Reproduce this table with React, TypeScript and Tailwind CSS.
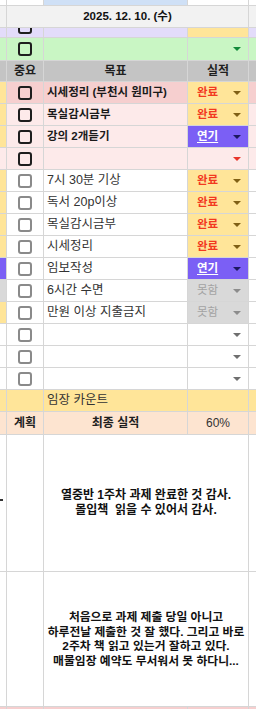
import React from 'react';

type Status = 'done' | 'delay' | 'fail' | 'none';

interface GoalRow {
  left: string;
  bg: string;
  goal: string;
  strong?: boolean;
  status: Status;
  arrow?: string;
}

const cell = 'border-r border-b border-[#d6d6d6]';

const rows: GoalRow[] = [
  { left: 'bg-[#ffe599]', bg: 'bg-[#f6cfcf]', goal: '시세정리 (부천시 원미구)', strong: true, status: 'done' },
  { left: 'bg-[#ffe599]', bg: 'bg-[#fdeaea]', goal: '목실감시금부', strong: true, status: 'done' },
  { left: 'bg-[#ffe599]', bg: 'bg-[#fdeaea]', goal: '강의 2개듣기', strong: true, status: 'delay' },
  { left: 'bg-[#fdeaea]', bg: 'bg-[#fdeaea]', goal: '', strong: true, status: 'none', arrow: '#e8342a' },
  { left: 'bg-[#ffe599]', bg: 'bg-white', goal: '7시 30분 기상', status: 'done' },
  { left: 'bg-[#ffe599]', bg: 'bg-white', goal: '독서 20p이상', status: 'done' },
  { left: 'bg-[#ffe599]', bg: 'bg-white', goal: '목실감시금부', status: 'done' },
  { left: 'bg-[#ffe599]', bg: 'bg-white', goal: '시세정리', status: 'done' },
  { left: 'bg-[#7b5ff5]', bg: 'bg-white', goal: '임보작성', status: 'delay' },
  { left: 'bg-[#d9d9d9]', bg: 'bg-white', goal: '6시간 수면', status: 'fail' },
  { left: 'bg-[#ffe599]', bg: 'bg-white', goal: '만원 이상 지출금지', status: 'fail' },
  { left: 'bg-white', bg: 'bg-white', goal: '', status: 'none', arrow: '#6f6f6f' },
  { left: 'bg-white', bg: 'bg-white', goal: '', status: 'none', arrow: '#6f6f6f' },
  { left: 'bg-white', bg: 'bg-white', goal: '', status: 'none', arrow: '#6f6f6f' },
];

function Arrow({ color }: { color: string }) {
  return (
    <svg width="8" height="4" viewBox="0 0 8 4" className="shrink-0">
      <polygon points="0,0 8,0 4,4" fill={color} />
    </svg>
  );
}

function Check({ strong }: { strong?: boolean }) {
  return (
    <span
      className={
        strong
          ? 'block w-[14px] h-[14px] rounded-[3px] border-2 border-[#1e1e1e] shrink-0'
          : 'block w-[14px] h-[14px] rounded-[3px] border-2 border-[#8a8a8a] shrink-0'
      }
    />
  );
}

function StatusCell({ status, arrow }: { status: Status; arrow?: string }) {
  if (status === 'done') {
    return (
      <div className={`${cell} bg-[#ffe599] flex items-center justify-between pl-[9px] pr-[7px]`}>
        <span className="font-bold text-[#f2391f]">완료</span>
        <Arrow color="#806015" />
      </div>
    );
  }
  if (status === 'delay') {
    return (
      <div className={`${cell} bg-[#7b5ff5] flex items-center justify-between pl-[9px] pr-[7px]`}>
        <span className="font-bold text-white underline underline-offset-2">연기</span>
        <Arrow color="#1d1860" />
      </div>
    );
  }
  if (status === 'fail') {
    return (
      <div className={`${cell} bg-[#d9d9d9] flex items-center justify-between pl-[9px] pr-[7px]`}>
        <span className="text-[#a3a3a3]">못함</span>
        <Arrow color="#8c8c8c" />
      </div>
    );
  }
  return (
    <div className={`${cell} flex items-center justify-end pr-[7px]`}>
      <Arrow color={arrow ?? '#6f6f6f'} />
    </div>
  );
}

export default function App() {
  return (
    <div className="w-[256px] h-[709px] overflow-hidden bg-white text-[12px] text-[#1f1f1f] font-['Liberation_Sans','Noto_Sans_CJK_KR',sans-serif]">
      <div className="grid grid-cols-[7px_37px_144px_61px_7px]">
        {/* partial row above */}
        <div className={`${cell} h-[6px]`} />
        <div className={`${cell} h-[6px]`} />
        <div className={`${cell} h-[6px] bg-[#cfe0f6]`} />
        <div className={`${cell} h-[6px]`} />
        <div className="border-b border-[#d6d6d6] h-[6px]" />

        {/* date */}
        <div className={`${cell} h-[22px] bg-[#f2f2f2]`} />
        <div className={`${cell} col-span-3 h-[22px] bg-[#f2f2f2] flex items-center justify-center font-bold text-[11.5px] text-[#111]`}>
          2025. 12. 10. (수)
        </div>
        <div className="border-b border-[#d6d6d6] h-[22px] bg-[#f2f2f2]" />

        {/* purple partial row */}
        <div className={`${cell} h-[10px] bg-[#e3dcfa]`} />
        <div className={`${cell} h-[10px] bg-[#e3dcfa] flex items-end justify-center pb-[3px] overflow-hidden`}>
          <Check strong />
        </div>
        <div className={`${cell} h-[10px] bg-[#e3dcfa]`} />
        <div className={`${cell} h-[10px] bg-[#ffe599]`} />
        <div className="border-b border-[#d6d6d6] h-[10px] bg-[#e3dcfa]" />

        {/* green row */}
        <div className={`${cell} h-[23px] bg-[#c9f6c4]`} />
        <div className={`${cell} h-[23px] bg-[#c9f6c4] flex items-center justify-center`}>
          <Check strong />
        </div>
        <div className={`${cell} h-[23px] bg-[#c9f6c4]`} />
        <div className={`${cell} h-[23px] bg-[#c9f6c4] flex items-center justify-end pr-[7px]`}>
          <Arrow color="#138a3a" />
        </div>
        <div className="border-b border-[#d6d6d6] h-[23px] bg-[#c9f6c4]" />

        {/* header */}
        <div className={`${cell} h-[21px] bg-[#c4c4c4]`} />
        <div className={`${cell} h-[21px] bg-[#c4c4c4] flex items-center justify-center font-bold text-[12px]`}>중요</div>
        <div className={`${cell} h-[21px] bg-[#c4c4c4] flex items-center justify-center font-bold text-[12px]`}>목표</div>
        <div className={`${cell} h-[21px] bg-[#c4c4c4] flex items-center justify-center font-bold text-[12px]`}>실적</div>
        <div className="border-b border-[#d6d6d6] h-[21px] bg-[#c4c4c4]" />

        {rows.map((r, i) => (
          <React.Fragment key={i}>
            <div className={`${cell} h-[22px] ${r.left}`} />
            <div className={`${cell} h-[22px] ${r.bg} flex items-center justify-center`}>
              <Check strong={r.strong} />
            </div>
            <div
              className={`${cell} h-[22px] ${r.bg} flex items-center pl-[3px] whitespace-nowrap ${
                r.strong ? 'font-bold text-[#1a1a1a] text-[11.5px]' : 'text-[#333] text-[12.5px]'
              }`}
            >
              {r.goal}
            </div>
            <div className={`h-[22px] ${r.bg} grid text-[11.5px]`}>
              <StatusCell status={r.status} arrow={r.arrow} />
            </div>
            <div className={`border-b border-[#d6d6d6] h-[22px] ${r.bg}`} />
          </React.Fragment>
        ))}

        {/* count row */}
        <div className={`${cell} h-[22px] bg-[#ffe599]`} />
        <div className={`${cell} h-[22px] bg-[#ffe599]`} />
        <div className={`${cell} h-[22px] bg-[#ffe599] flex items-center pl-[3px] text-[#333] text-[12.5px]`}>임장 카운트</div>
        <div className={`${cell} h-[22px] bg-[#ffe599]`} />
        <div className="border-b border-[#d6d6d6] h-[22px] bg-[#ffe599]" />

        {/* plan row */}
        <div className={`${cell} h-[23px] bg-[#fde4d0]`} />
        <div className={`${cell} h-[23px] bg-[#fde4d0] flex items-center justify-center font-bold`}>계획</div>
        <div className={`${cell} h-[23px] bg-[#fde4d0] flex items-center justify-center font-bold`}>최종 실적</div>
        <div className={`${cell} h-[23px] bg-[#fde4d0] flex items-center justify-center text-[#333]`}>60%</div>
        <div className="border-b border-[#d6d6d6] h-[23px] bg-[#fde4d0]" />

        {/* notes */}
        <div className={`${cell} h-[137px] flex items-center`}>
          <span className="block w-[3px] h-[2px] bg-[#333] mt-[-6px]" />
        </div>
        <div className={`${cell} h-[137px]`} />
        <div className={`${cell} col-span-2 h-[137px] flex items-center justify-center text-center font-bold text-[#111] leading-[15px]`}>
          <p>
            열중반 1주차 과제 완료한 것 감사.
            <br />
            몰입책&nbsp; 읽을 수 있어서 감사.
          </p>
        </div>
        <div className="border-b border-[#d6d6d6] h-[137px]" />

        <div className={`${cell} h-[135px]`} />
        <div className={`${cell} h-[135px]`} />
        <div className={`${cell} col-span-2 h-[135px] flex items-center justify-center text-center font-bold text-[#111] text-[11.8px] leading-[14.5px]`}>
          <p>
            처음으로 과제 제출 당일 아니고
            <br />
            하루전날 제출한 것 잘 했다. 그리고 바로
            <br />
            2주차 책 읽고 있는거 잘하고 있다.
            <br />
            매물임장 예약도 무서워서 못 하다니...
          </p>
        </div>
        <div className="border-b border-[#d6d6d6] h-[135px]" />

        {/* partial row below */}
        <div className={`${cell} h-[10px] bg-[#f6cfcf]`} />
        <div className={`${cell} h-[10px] bg-[#f6cfcf]`} />
        <div className={`${cell} h-[10px] bg-[#f6cfcf]`} />
        <div className={`${cell} h-[10px] bg-[#f6cfcf]`} />
        <div className="h-[10px] bg-[#f6cfcf]" />
      </div>
    </div>
  );
}
